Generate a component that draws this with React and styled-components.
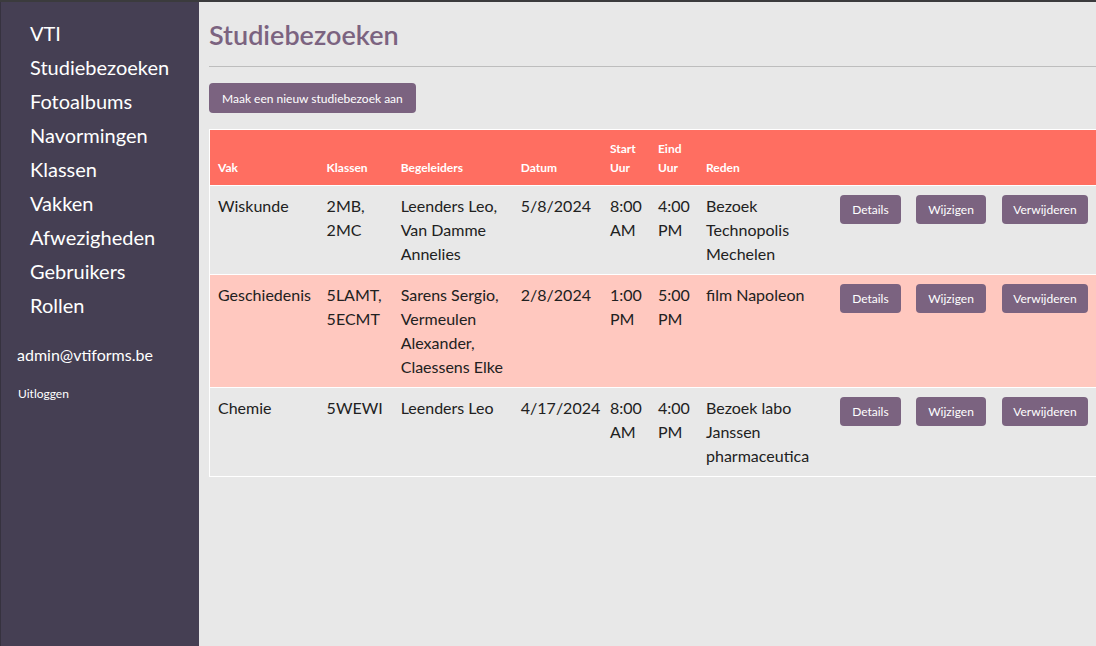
import React from "react";
import styled, { createGlobalStyle } from "styled-components";

const Global = createGlobalStyle`
  html, body { margin: 0; padding: 0; }
  body {
    font-family: Lato, "Noto Sans", sans-serif;
    background: #e8e8e8;
    color: #212121;
  }
  * { box-sizing: border-box; }
`;

const Page = styled.div`
  display: flex;
  height: 646px;
  border-top: 2px solid #3b3b3d;
  overflow: hidden;
`;

const Sidebar = styled.nav`
  width: 199px;
  flex: none;
  background: #453f53;
  border-left: 1px solid #36323f;
  padding: 14px 0 0 0;
  display: flex;
  flex-direction: column;
`;

const NavList = styled.ul`
  list-style: none;
  margin: 0;
  padding: 0 0 0 29px;
`;

const NavItem = styled.li`
  font-size: 20px;
  line-height: 34px;
  color: #ffffff;
`;

const UserMail = styled.div`
  margin-top: 21px;
  padding-left: 16px;
  font-size: 16px;
  line-height: 24px;
  color: #ffffff;
`;

const Logout = styled.div`
  margin-top: 17px;
  padding-left: 17px;
  font-size: 12px;
  line-height: 20px;
  color: #ffffff;
`;

const Main = styled.main`
  flex: 1;
  min-width: 0;
  padding: 0 0 0 10px;
`;

const Title = styled.h1`
  margin: 0;
  padding-top: 15px;
  font-size: 27px;
  line-height: 36px;
  font-weight: 600;
  color: #7b6380;
`;

const Rule = styled.hr`
  margin: 13px 0 16px 0;
  border: 0;
  border-top: 1px solid #bdbdbd;
`;

const Button = styled.button`
  font-family: inherit;
  font-size: 12px;
  line-height: 17px;
  color: #ffffff;
  background: #7b6380;
  border: 0;
  border-radius: 4px;
  padding: 6px ${(p) => (p.$tight ? "11px" : "12px")};
  height: 29px;
  white-space: nowrap;
  cursor: pointer;
`;

const CreateButton = styled(Button)`
  padding: 6px 13px;
  height: 30px;
`;

const Table = styled.table`
  margin-top: 16px;
  width: 888px;
  table-layout: fixed;
  border-collapse: collapse;
  border: 1px solid #ffffff;
`;

const HeadCell = styled.th`
  background: #ff6e61;
  color: #ffffff;
  font-size: 12px;
  font-weight: 700;
  line-height: 19px;
  text-align: left;
  vertical-align: bottom;
  padding: 9px 8px 8px 8px;
`;

const Row = styled.tr`
  background: ${(p) => (p.$alt ? "#ffc8bf" : "#e8e8e8")};
  border-top: 1px solid #ffffff;
`;

const Cell = styled.td`
  font-size: 16px;
  line-height: 24px;
  color: #212121;
  vertical-align: top;
  padding: 8px 8px;
`;

const ActionCell = styled.td`
  vertical-align: top;
  padding: 9px 8px 8px 8px;
`;

const cols = [109, 74, 120, 89, 48, 48, 134, 76, 86, 102];

const rows = [
  {
    vak: "Wiskunde",
    klassen: "2MB, 2MC",
    begeleiders: "Leenders Leo, Van Damme Annelies",
    datum: "5/8/2024",
    start: "8:00 AM",
    eind: "4:00 PM",
    reden: "Bezoek Technopolis Mechelen",
  },
  {
    vak: "Geschiedenis",
    klassen: "5LAMT, 5ECMT",
    begeleiders: "Sarens Sergio, Vermeulen Alexander, Claessens Elke",
    datum: "2/8/2024",
    start: "1:00 PM",
    eind: "5:00 PM",
    reden: "film Napoleon",
  },
  {
    vak: "Chemie",
    klassen: "5WEWI",
    begeleiders: "Leenders Leo",
    datum: "4/17/2024",
    start: "8:00 AM",
    eind: "4:00 PM",
    reden: "Bezoek labo Janssen pharmaceutica",
  },
];

const nav = [
  "VTI",
  "Studiebezoeken",
  "Fotoalbums",
  "Navormingen",
  "Klassen",
  "Vakken",
  "Afwezigheden",
  "Gebruikers",
  "Rollen",
];

export default function App() {
  return (
    <>
      <Global />
      <Page>
        <Sidebar>
          <NavList>
            {nav.map((n) => (
              <NavItem key={n}>{n}</NavItem>
            ))}
          </NavList>
          <UserMail>admin@vtiforms.be</UserMail>
          <Logout>Uitloggen</Logout>
        </Sidebar>
        <Main>
          <Title>Studiebezoeken</Title>
          <Rule />
          <CreateButton>Maak een nieuw studiebezoek aan</CreateButton>
          <Table>
            <colgroup>
              {cols.map((w, i) => (
                <col key={i} style={{ width: w }} />
              ))}
            </colgroup>
            <thead>
              <tr>
                <HeadCell>Vak</HeadCell>
                <HeadCell>Klassen</HeadCell>
                <HeadCell>Begeleiders</HeadCell>
                <HeadCell>Datum</HeadCell>
                <HeadCell>Start Uur</HeadCell>
                <HeadCell>Eind Uur</HeadCell>
                <HeadCell>Reden</HeadCell>
                <HeadCell />
                <HeadCell />
                <HeadCell />
              </tr>
            </thead>
            <tbody>
              {rows.map((r, i) => (
                <Row key={i} $alt={i === 1}>
                  <Cell>{r.vak}</Cell>
                  <Cell>{r.klassen}</Cell>
                  <Cell>{r.begeleiders}</Cell>
                  <Cell>{r.datum}</Cell>
                  <Cell>{r.start}</Cell>
                  <Cell>{r.eind}</Cell>
                  <Cell>{r.reden}</Cell>
                  <ActionCell>
                    <Button>Details</Button>
                  </ActionCell>
                  <ActionCell>
                    <Button>Wijzigen</Button>
                  </ActionCell>
                  <ActionCell>
                    <Button $tight>Verwijderen</Button>
                  </ActionCell>
                </Row>
              ))}
            </tbody>
          </Table>
        </Main>
      </Page>
    </>
  );
}
